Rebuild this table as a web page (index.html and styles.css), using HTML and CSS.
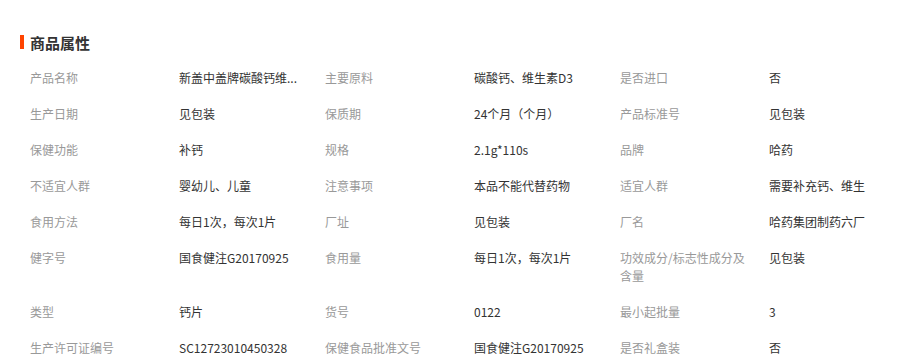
FILE: index.html
```html
<!DOCTYPE html>
<html lang="zh-CN">
<head>
<meta charset="utf-8">
<title>商品属性</title>
<link rel="stylesheet" href="styles.css">
</head>
<body>
<div class="attrs">
  <h2 class="attrs-title"><span class="bar"></span>商品属性</h2>
  <div class="rows">
    <div class="row">
      <span class="k">产品名称</span><span class="v">新盖中盖牌碳酸钙维...</span>
      <span class="k">主要原料</span><span class="v">碳酸钙、维生素D3</span>
      <span class="k">是否进口</span><span class="v">否</span>
    </div>
    <div class="row">
      <span class="k">生产日期</span><span class="v">见包装</span>
      <span class="k">保质期</span><span class="v">24个月（个月）</span>
      <span class="k">产品标准号</span><span class="v">见包装</span>
    </div>
    <div class="row">
      <span class="k">保健功能</span><span class="v">补钙</span>
      <span class="k">规格</span><span class="v">2.1g*110s</span>
      <span class="k">品牌</span><span class="v">哈药</span>
    </div>
    <div class="row">
      <span class="k">不适宜人群</span><span class="v">婴幼儿、儿童</span>
      <span class="k">注意事项</span><span class="v">本品不能代替药物</span>
      <span class="k">适宜人群</span><span class="v">需要补充钙、维生</span>
    </div>
    <div class="row">
      <span class="k">食用方法</span><span class="v">每日1次，每次1片</span>
      <span class="k">厂址</span><span class="v">见包装</span>
      <span class="k">厂名</span><span class="v">哈药集团制药六厂</span>
    </div>
    <div class="row">
      <span class="k">健字号</span><span class="v">国食健注G20170925</span>
      <span class="k">食用量</span><span class="v">每日1次，每次1片</span>
      <span class="k">功效成分/标志性成分及含量</span><span class="v">见包装</span>
    </div>
    <div class="row">
      <span class="k">类型</span><span class="v">钙片</span>
      <span class="k">货号</span><span class="v">0122</span>
      <span class="k">最小起批量</span><span class="v">3</span>
    </div>
    <div class="row">
      <span class="k">生产许可证编号</span><span class="v">SC12723010450328</span>
      <span class="k">保健食品批准文号</span><span class="v">国食健注G20170925</span>
      <span class="k">是否礼盒装</span><span class="v">否</span>
    </div>
  </div>
</div>
</body>
</html>
```

FILE: styles.css
```css
html, body {
  margin: 0;
  padding: 0;
  background: #fff;
}
body {
  font-family: "Noto Sans CJK SC", "Microsoft YaHei", sans-serif;
  color: #333;
}
.attrs {
  padding: 33px 0 0 20px;
}
.attrs-title {
  display: flex;
  align-items: flex-start;
  margin: 0 0 7px 0;
  height: 20px;
  line-height: 20px;
  font-size: 15px;
  font-weight: bold;
  color: #333;
}
.attrs-title .bar {
  display: block;
  width: 4px;
  height: 14px;
  margin: 2px 6px 0 0;
  background: #ff4400;
}
.rows {
  display: flex;
  flex-direction: column;
  padding-left: 10px;
}
.row {
  display: flex;
  align-items: flex-start;
  padding: 9px 0;
  font-size: 12px;
  line-height: 18px;
}
.k {
  flex: 0 0 149px;
  box-sizing: border-box;
  padding-right: 22px;
  color: #999;
}
.v {
  flex: 0 0 146px;
  box-sizing: border-box;
  padding-right: 10px;
  color: #333;
  white-space: nowrap;
}
```
